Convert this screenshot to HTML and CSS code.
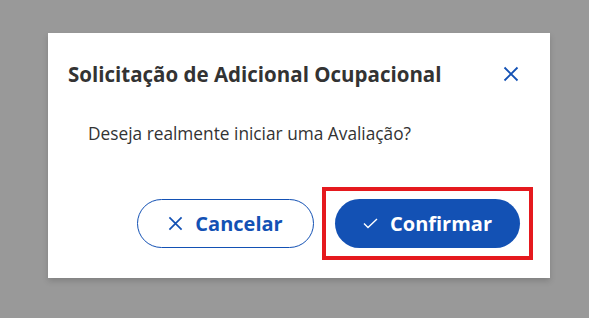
FILE: index.html
```html
<!DOCTYPE html>
<html lang="pt-BR">
<head>
<meta charset="utf-8">
<link rel="stylesheet" href="styles.css">
</head>
<body>
<div class="modal">
  <div class="modal-header">
    <h2 class="modal-title">Solicitação de Adicional Ocupacional</h2>
    <button class="close-btn" aria-label="Fechar">
      <svg width="16" height="16" viewBox="0 0 16 16"><path d="M1.5 1.5 L14.5 14.5 M14.5 1.5 L1.5 14.5" stroke="#1351b4" stroke-width="1.8" fill="none"/></svg>
    </button>
  </div>
  <div class="modal-body">Deseja realmente iniciar uma Avaliação?</div>
  <div class="modal-footer">
    <button class="btn btn-secondary">
      <svg width="15" height="15" viewBox="0 0 16 16"><path d="M1.5 1.5 L14.5 14.5 M14.5 1.5 L1.5 14.5" stroke="#1351b4" stroke-width="1.8" fill="none"/></svg>
      <span>Cancelar</span>
    </button>
    <div class="highlight">
      <button class="btn btn-primary">
        <svg width="15" height="11" viewBox="0 0 15 11"><path d="M1 5.5 L5 9.5 L14 1" stroke="#fff" stroke-width="1.4" fill="none"/></svg>
        <span>Confirmar</span>
      </button>
    </div>
  </div>
</div>
</body>
</html>
```
FILE: styles.css
```css
html, body {
  margin: 0;
  padding: 0;
}
body {
  background: #999999;
  width: 589px;
  height: 318px;
  overflow: hidden;
  font-family: "Open Sans", "Lato", sans-serif;
  color: #333333;
}
.modal {
  margin: 33px 0 0 48px;
  width: 502px;
  height: 245px;
  background: #ffffff;
  box-shadow: 0 3px 6px rgba(0,0,0,0.16);
  display: flex;
  flex-direction: column;
}
.modal-header {
  display: flex;
  align-items: center;
  justify-content: space-between;
  padding: 24px 22px 0 20px;
}
.modal-title {
  margin: 0;
  font-size: 20.5px;
  font-weight: 700;
  line-height: 28px;
}
.close-btn {
  border: 0;
  background: transparent;
  width: 34px;
  height: 34px;
  display: flex;
  align-items: center;
  justify-content: center;
  padding: 0;
}
.modal-body {
  padding: 30px 40px 0 40px;
  font-size: 17.3px;
  line-height: 26px;
}
.modal-footer {
  margin-top: auto;
  padding: 0 30px 30px 0;
  display: flex;
  justify-content: flex-end;
  align-items: center;
  gap: 21px;
}
.btn {
  height: 49px;
  border-radius: 25px;
  font-family: inherit;
  font-size: 20px;
  font-weight: 700;
  display: flex;
  align-items: center;
  justify-content: center;
  gap: 12px;
  padding: 0;
}
.btn-secondary {
  width: 177px;
  background: #ffffff;
  color: #1351b4;
  border: 1px solid #1351b4;
}
.btn-primary {
  width: 185px;
  background: #1351b4;
  color: #ffffff;
  border: 0;
}
.highlight {
  position: relative;
}
.highlight::after {
  content: "";
  position: absolute;
  left: -13px;
  top: -12px;
  right: -13px;
  bottom: -12px;
  border: 4px solid #e5191e;
  pointer-events: none;
}
```
